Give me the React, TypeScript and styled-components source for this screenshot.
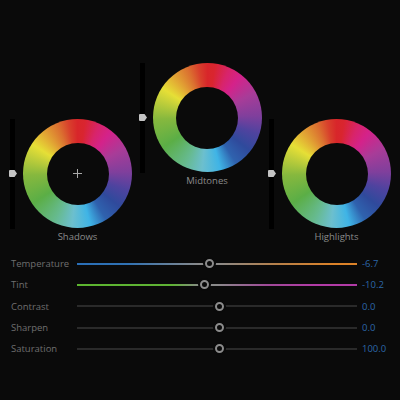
import React from 'react'
import styled, { createGlobalStyle } from 'styled-components'

const GlobalStyle = createGlobalStyle`
  html, body {
    margin: 0;
    padding: 0;
    background: #0a0a0a;
  }
`

const Panel = styled.div`
  width: 400px;
  height: 400px;
  overflow: hidden;
  background: #0a0a0a;
  font-family: 'Open Sans', 'Noto Sans', sans-serif;
  display: flex;
  flex-direction: column;
`

const WheelRow = styled.div`
  display: flex;
  padding: 63px 0 0 10px;
  height: 253px;
  box-sizing: border-box;
  flex-shrink: 0;
`

const WheelUnit = styled.div<{ $raised?: boolean }>`
  width: 129.5px;
  display: flex;
  gap: 8px;
  margin-top: ${(props) => (props.$raised ? '0' : '56px')};
`

const LumaStrip = styled.div`
  position: relative;
  width: 5px;
  height: 110px;
  background: #000;
`

const LumaHandle = styled.svg`
  position: absolute;
  left: -1px;
  top: 51px;
`

const WheelColumn = styled.div`
  display: flex;
  flex-direction: column;
  align-items: center;
  width: 109px;
`

const Wheel = styled.div`
  position: relative;
  width: 109px;
  height: 109px;
  flex-shrink: 0;
  border-radius: 50%;
  background: conic-gradient(
    #d8262a 0deg,
    #d9252f 8deg,
    #d8246a 24deg,
    #d4228a 38deg,
    #a83c98 62deg,
    #803f9c 88deg,
    #4f439f 108deg,
    #2f4a9c 128deg,
    #2f62ae 148deg,
    #3fb4e6 166deg,
    #6cbfce 186deg,
    #66ba8e 206deg,
    #5bae46 236deg,
    #86b83e 268deg,
    #c2cf3a 290deg,
    #e6df36 303deg,
    #e2a834 320deg,
    #db7030 338deg,
    #d8402c 350deg,
    #d8262a 360deg
  );
  display: flex;
  align-items: center;
  justify-content: center;
`

const WheelHole = styled.div`
  width: 62px;
  height: 62px;
  border-radius: 50%;
  background: #0a0a0a;
  display: flex;
  align-items: center;
  justify-content: center;
`

const WheelLabel = styled.div`
  margin-top: 2px;
  font-size: 9.5px;
  line-height: 14px;
  color: #8a8a8a;
`

const Controls = styled.div`
  display: flex;
  flex-direction: column;
  padding: 0 0 0 11px;
`

const ControlRow = styled.div`
  display: flex;
  align-items: center;
  height: 21.3px;
`

const ControlLabel = styled.div`
  width: 66px;
  font-size: 9.5px;
  color: #6f6f6f;
`

const Track = styled.div<{ $gradient?: string }>`
  position: relative;
  width: 280px;
  height: 2px;
  background: ${(props) => props.$gradient ?? '#2a2a2a'};
`

const Thumb = styled.div`
  position: absolute;
  top: -3.5px;
  width: 9px;
  height: 9px;
  margin-left: -4.5px;
  box-sizing: border-box;
  border: 2px solid #8c8c8c;
  border-radius: 50%;
  background: #0a0a0a;
  box-shadow: 0 0 0 2px #0a0a0a;
`

const ControlValue = styled.div`
  margin-left: 5px;
  font-size: 9.5px;
  color: #2c67a8;
`

const wheels = [
  { name: 'Shadows', raised: false, cross: true },
  { name: 'Midtones', raised: true, cross: false },
  { name: 'Highlights', raised: false, cross: false },
]

const controls = [
  {
    name: 'Temperature',
    value: '-6.7',
    position: 132,
    gradient: 'linear-gradient(90deg, #2a6fb8 0%, #3072b4 18%, #8a8a8a 44%, #8a8a8a 50%, #b88048 72%, #dc8228 92%)',
  },
  {
    name: 'Tint',
    value: '-10.2',
    position: 127,
    gradient: 'linear-gradient(90deg, #5cb52f 0%, #5fb235 34%, #8a8a8a 44%, #8a8a8a 50%, #a04a98 68%, #b23ba6 85%)',
  },
  { name: 'Contrast', value: '0.0', position: 142 },
  { name: 'Sharpen', value: '0.0', position: 142 },
  { name: 'Saturation', value: '100.0', position: 142 },
]

const App: React.FC = () => {
  return (
    <Panel>
      <GlobalStyle />
      <WheelRow>
        {wheels.map((wheel) => (
          <WheelUnit key={wheel.name} $raised={wheel.raised}>
            <LumaStrip>
              <LumaHandle width='8' height='7' viewBox='0 0 8 7'>
                <path d='M1 0h4.500L8 3.500 5.500 7H1a1 1 0 0 1-1-1V1a1 1 0 0 1 1-1z' fill='#c4c4c4' />
              </LumaHandle>
            </LumaStrip>
            <WheelColumn>
              <Wheel>
                <WheelHole>
                  {wheel.cross && (
                    <svg width='9' height='9' viewBox='0 0 9 9'>
                      <path d='M4.500 0v9M0 4.500h9' stroke='#a8a8a8' strokeWidth='1' />
                    </svg>
                  )}
                </WheelHole>
              </Wheel>
              <WheelLabel>{wheel.name}</WheelLabel>
            </WheelColumn>
          </WheelUnit>
        ))}
      </WheelRow>
      <Controls>
        {controls.map((control) => (
          <ControlRow key={control.name}>
            <ControlLabel>{control.name}</ControlLabel>
            <Track $gradient={control.gradient}>
              <Thumb style={{ left: control.position }} />
            </Track>
            <ControlValue>{control.value}</ControlValue>
          </ControlRow>
        ))}
      </Controls>
    </Panel>
  )
}

export default App
